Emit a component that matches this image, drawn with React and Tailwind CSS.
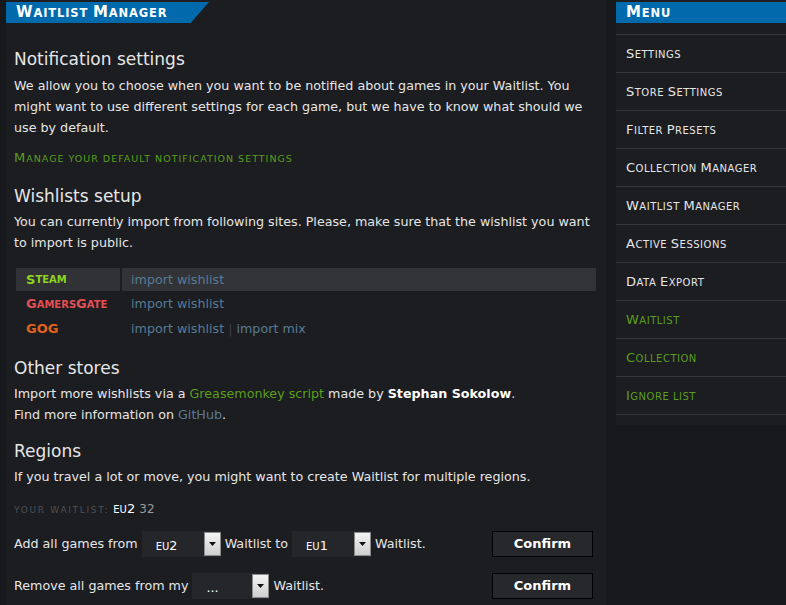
import React from "react";

const menu = [
  { label: "Settings", green: false },
  { label: "Store Settings", green: false },
  { label: "Filter Presets", green: false },
  { label: "Collection Manager", green: false },
  { label: "Waitlist Manager", green: false },
  { label: "Active Sessions", green: false },
  { label: "Data Export", green: false },
  { label: "Waitlist", green: true },
  { label: "Collection", green: true },
  { label: "Ignore list", green: true },
];

// hand-rolled small caps: capitals keep the big size, the rest is uppercased smaller
function SC({ text, big, small }) {
  const runs = [];
  for (const ch of text) {
    const up = ch !== ch.toLowerCase();
    const last = runs[runs.length - 1];
    if (last && last.up === up) last.s += ch;
    else runs.push({ up, s: ch });
  }
  return (
    <>
      {runs.map((r, i) =>
        r.up ? (
          <span key={i} className={big}>{r.s}</span>
        ) : (
          <span key={i} className={`${small} uppercase`}>{r.s}</span>
        )
      )}
    </>
  );
}

function Select({ children, width }) {
  return (
    <div className={`flex h-[26px] ${width} bg-[#25262a] items-stretch`}>
      <div className="flex-1 pl-[14px] pt-[5px] text-white leading-[20px]">{children}</div>
      <div className="w-[17px] my-[1px] bg-gradient-to-b from-[#f4f4f4] to-[#cfcfcf] border border-[#8a8a8a] flex items-center justify-center">
        <svg width="7" height="4" viewBox="0 0 7 4"><path d="M0 0h7L3.5 4z" fill="#111" /></svg>
      </div>
    </div>
  );
}

function ConfirmButton() {
  return (
    <button className="w-[101px] h-[26px] bg-[#26282c] border border-black text-white font-bold text-[13px]">
      Confirm
    </button>
  );
}

export default function App() {
  return (
    <div className="w-[786px] h-[605px] bg-[#17181b] flex overflow-hidden font-['DejaVu_Sans',Verdana,sans-serif] text-[12.7px] text-[#e6e6e6]">
      <div className="ml-[6px] w-[600px] bg-[#1c1d21] pt-[2px]">
        <div className="h-[21px] w-[203px] bg-[#006aad] [clip-path:polygon(0_0,100%_0,91%_100%,0_100%)] pl-[10px] flex items-center">
          <span className="text-white font-bold leading-none tracking-[0.85px]">
            <SC text="Waitlist Manager" big="text-[15px]" small="text-[11.5px]" />
          </span>
        </div>

        <div className="pl-[8px] pr-[10px]">
          <h2 className="text-[17px] mt-[25px] leading-[22px]">Notification settings</h2>
          <p className="mt-[5px] leading-[21px]">
            We allow you to choose when you want to be notified about games in your Waitlist. You might want to use different settings for each game, but we have to know what should we use by default.
          </p>
          <div className="mt-[10px] text-[#5a9e1c] leading-[20px] tracking-[1px]">
            <SC text="Manage your default notification settings" big="text-[13px]" small="text-[9.5px]" />
          </div>

          <h2 className="text-[17px] mt-[16px] leading-[22px]">Wishlists setup</h2>
          <p className="mt-[4px] leading-[21px]">
            You can currently import from following sites. Please, make sure that the wishlist you want to import is public.
          </p>

          <div className="mt-[15px] ml-[2px] flex flex-col gap-[1px]">
            <div className="flex gap-[2px] h-[23px]">
              <div className="w-[104px] pl-[10px] flex items-center bg-[#313236] font-bold text-[#8ed51f]">
                <SC text="Steam" big="text-[13px]" small="text-[10px]" />
              </div>
              <div className="flex-1 flex items-center pl-[9px] text-[#587b94] bg-[#323337]">import wishlist</div>
            </div>
            <div className="flex gap-[2px] h-[24px] items-center">
              <div className="w-[104px] pl-[10px] font-bold text-[#e34f55]">
                <SC text="GamersGate" big="text-[13px]" small="text-[10px]" />
              </div>
              <div className="flex-1 pl-[9px] text-[#587b94]">import wishlist</div>
            </div>
            <div className="flex gap-[2px] h-[24px] items-center">
              <div className="w-[104px] pl-[10px] font-bold text-[13px] text-[#e2611f]">GOG</div>
              <div className="flex-1 pl-[9px] text-[#587b94]">
                import wishlist <span className="text-[#3b4048]">|</span> import mix
              </div>
            </div>
          </div>

          <h2 className="text-[17px] mt-[16px] leading-[22px]">Other stores</h2>
          <p className="mt-[4px] leading-[21px]">
            Import more wishlists via a <span className="text-[#5a9e1c]">Greasemonkey script</span> made by{" "}
            <b className="text-white">Stephan Sokolow</b>.
            <br />
            Find more information on <span className="text-[#587b94]">GitHub</span>.
          </p>

          <h2 className="text-[17px] mt-[15px] leading-[22px]">Regions</h2>
          <p className="mt-[4px] leading-[21px]">
            If you travel a lot or move, you might want to create Waitlist for multiple regions.
          </p>

          <div className="mt-[12px] leading-[20px] text-[#4e5055]">
            <span className="text-[9px] tracking-[1.7px]">YOUR WAITLIST:</span>{" "}
            <span className="text-white"><span className="text-[10px]">EU</span><span className="text-[13px]">2</span></span>{" "}
            <span className="text-[#9a9a9a] text-[12px]">32</span>
          </div>

          <div className="mt-[11px] flex items-center">
            <div className="flex items-center gap-[4px] flex-1">
              <span>Add all games from</span>
              <Select width="w-[79px]">
                <span className="text-[10px]">EU</span><span className="text-[12.7px]">2</span>
              </Select>
              <span>Waitlist to</span>
              <Select width="w-[79px]">
                <span className="text-[10px]">EU</span><span className="text-[12.7px]">1</span>
              </Select>
              <span>Waitlist.</span>
            </div>
            <div className="mr-[3px]"><ConfirmButton /></div>
          </div>

          <div className="mt-[16px] flex items-center">
            <div className="flex items-center gap-[4px] flex-1">
              <span>Remove all games from my</span>
              <Select width="w-[77px]">...</Select>
              <span>Waitlist.</span>
            </div>
            <div className="mr-[3px]"><ConfirmButton /></div>
          </div>
        </div>
      </div>

      <div className="ml-[10px] w-[170px] self-start pt-[2px] bg-[#1c1d21]">
        <div className="h-[21px] bg-[#006aad] pl-[10px] flex items-center">
          <span className="text-white font-bold leading-none tracking-[0.85px]">
            <SC text="Menu" big="text-[15px]" small="text-[11.5px]" />
          </span>
        </div>
        <div className="mt-[11px] border-t border-[#34353a]">
          {menu.map((m) => (
            <div
              key={m.label}
              className={`h-[38px] flex items-center pl-[10px] border-b border-[#34353a] tracking-[0.5px] ${m.green ? "text-[#5a9e1c]" : "text-[#e6e6e6]"}`}
            >
              <span><SC text={m.label} big="text-[13px]" small="text-[10px]" /></span>
            </div>
          ))}
        </div>
        <div className="h-[10px]" />
      </div>
    </div>
  );
}
